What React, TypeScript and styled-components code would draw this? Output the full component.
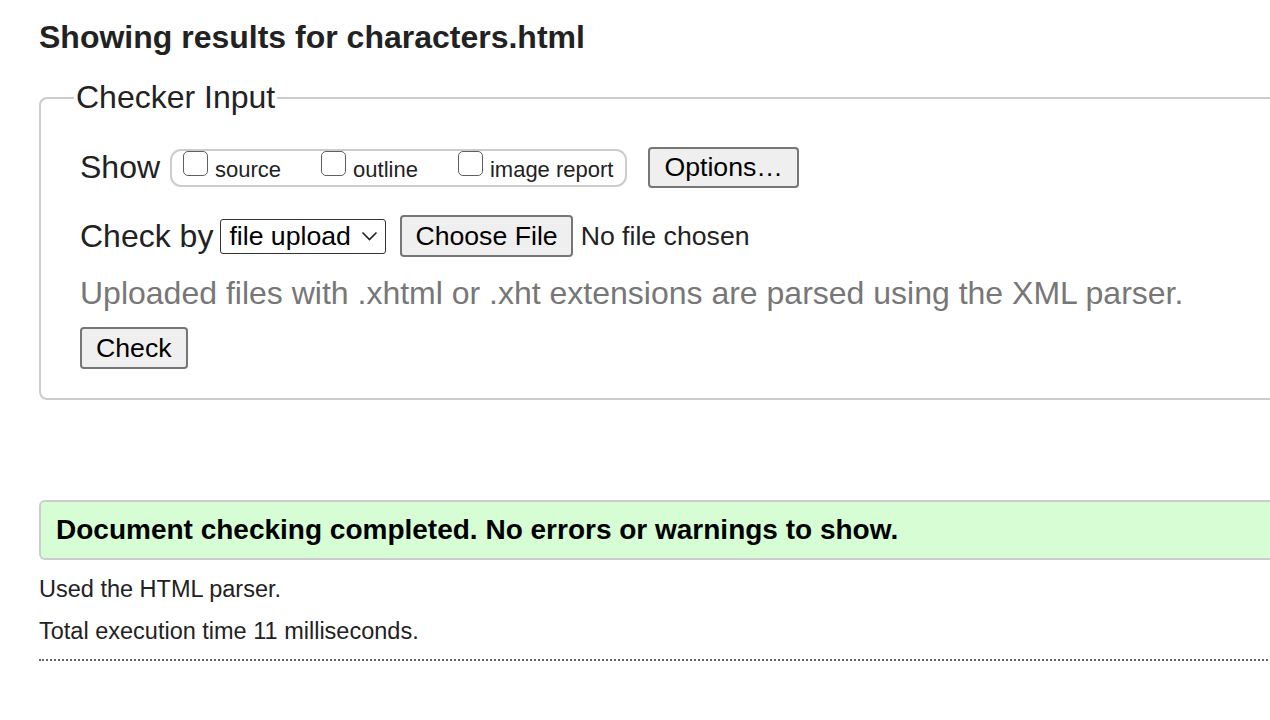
import React from "react";
import styled, { createGlobalStyle } from "styled-components";

const Global = createGlobalStyle`
  html, body { margin: 0; padding: 0; background: #fff; overflow: hidden; }
  body { font-family: "Liberation Sans", Arial, sans-serif; color: #222; }
`;

const Page = styled.div`
  width: 1500px;
  padding: 0 0 0 39px;
`;

const Heading = styled.h2`
  font-size: 32px;
  font-weight: bold;
  line-height: 37px;
  margin: 19px 0 0;
  color: #222;
`;

const Fieldset = styled.fieldset`
  margin: 23px 0 0;
  border: 2px solid #ccc;
  border-radius: 8px;
  padding: 0 0 29px 39px;
  min-width: 0;
`;

const Legend = styled.legend`
  font-size: 32px;
  line-height: 37px;
  padding: 0 2px;
  margin-left: -6px;
  color: #222;
`;

const Row = styled.div<{ $top: number }>`
  display: flex;
  align-items: center;
  margin-top: ${(p) => p.$top}px;
`;

const BigLabel = styled.span<{ $gap: number }>`
  font-size: 32px;
  line-height: 37px;
  margin-right: ${(p) => p.$gap}px;
  color: #222;
`;

const Group = styled.div`
  display: inline-flex;
  align-items: flex-start;
  box-sizing: border-box;
  height: 38px;
  border: 2px solid #ccc;
  border-radius: 11px;
  padding: 0 12px 0 11px;
`;

const CheckItem = styled.label<{ $last?: boolean }>`
  display: inline-flex;
  align-items: flex-start;
  margin-right: ${(p) => (p.$last ? 0 : 40)}px;
`;

const Box = styled.input`
  appearance: none;
  -webkit-appearance: none;
  box-sizing: border-box;
  width: 25px;
  height: 25px;
  margin: 0 7px 0 0;
  border: 1.5px solid #5f5f5f;
  border-radius: 5px;
  background: #fff;
`;

const SmallText = styled.span`
  font-size: 22px;
  line-height: 24px;
  padding-top: 7px;
  color: #222;
`;

const Button = styled.button<{ $ml?: number; $h?: number; $px?: number }>`
  box-sizing: border-box;
  height: ${(p) => p.$h ?? 42}px;
  margin-left: ${(p) => p.$ml ?? 0}px;
  padding: 0 ${(p) => p.$px ?? 14}px;
  font-family: "Liberation Sans", Arial, sans-serif;
  font-size: 26.67px;
  color: #000;
  background: #efefef;
  border: 2px solid #767676;
  border-radius: 4px;
`;

const SelectBox = styled.div`
  box-sizing: border-box;
  display: inline-flex;
  align-items: center;
  gap: 10px;
  width: 166px;
  height: 35px;
  padding: 0 7px 0 8px;
  border: 1.5px solid #333;
  border-radius: 3px;
  background: #fff;
  font-size: 26.67px;
  color: #000;
`;

const FileNote = styled.span`
  font-size: 26.67px;
  margin-left: 8px;
  color: #222;
`;

const Hint = styled.p`
  margin: 18px 0 0;
  font-size: 32px;
  line-height: 37px;
  color: #777;
`;

const CheckWrap = styled.div`
  margin-top: 15px;
`;

const Success = styled.div`
  box-sizing: border-box;
  margin-top: 100px;
  height: 60px;
  display: flex;
  align-items: center;
  padding-left: 15px;
  border: 2px solid #ccc;
  border-radius: 6px;
  background: #d7fdd4;
  font-size: 28px;
  font-weight: bold;
  color: #000;
`;

const Info = styled.p<{ $top: number }>`
  margin: ${(p) => p.$top}px 0 0;
  font-size: 23.5px;
  line-height: 27px;
  color: #222;
`;

const Footer = styled.div`
  margin-top: 14px;
  border-bottom: 2px dotted #666;
`;

const Chevron = () => (
  <svg width="17" height="10" viewBox="0 0 17 10" fill="none">
    <path d="M1.5 1.5 L8.5 8.5 L15.5 1.5" stroke="#222" strokeWidth="1.6" />
  </svg>
);

export default function App() {
  return (
    <>
      <Global />
      <Page>
        <Heading>Showing results for characters.html</Heading>
        <Fieldset>
          <Legend>Checker Input</Legend>
          <Row $top={31}>
            <BigLabel $gap={10}>Show</BigLabel>
            <Group>
              <CheckItem>
                <Box type="checkbox" />
                <SmallText>source</SmallText>
              </CheckItem>
              <CheckItem>
                <Box type="checkbox" />
                <SmallText>outline</SmallText>
              </CheckItem>
              <CheckItem $last>
                <Box type="checkbox" />
                <SmallText>image report</SmallText>
              </CheckItem>
            </Group>
            <Button $ml={21} $h={41}>Options…</Button>
          </Row>
          <Row $top={27}>
            <BigLabel $gap={7}>Check by</BigLabel>
            <SelectBox>
              <span>file upload</span>
              <Chevron />
            </SelectBox>
            <Button $ml={14} $px={13}>Choose File</Button>
            <FileNote>No file chosen</FileNote>
          </Row>
          <Hint>Uploaded files with .xhtml or .xht extensions are parsed using the XML parser.</Hint>
          <CheckWrap>
            <Button>Check</Button>
          </CheckWrap>
        </Fieldset>
        <Success>Document checking completed. No errors or warnings to show.</Success>
        <Info $top={16}>Used the HTML parser.</Info>
        <Info $top={15}>Total execution time 11 milliseconds.</Info>
        <Footer />
      </Page>
    </>
  );
}
